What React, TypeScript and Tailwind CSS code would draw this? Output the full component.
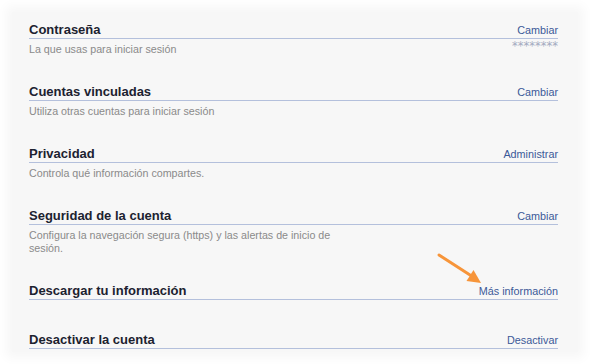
const rows = [
  { title: "Contraseña", action: "Cambiar", desc: "La que usas para iniciar sesión", stars: true },
  { title: "Cuentas vinculadas", action: "Cambiar", desc: "Utiliza otras cuentas para iniciar sesión" },
  { title: "Privacidad", action: "Administrar", desc: "Controla qué información compartes." },
  {
    title: "Seguridad de la cuenta",
    action: "Cambiar",
    desc: "Configura la navegación segura (https) y las alertas de inicio de\nsesión.",
  },
  { title: "Descargar tu información", action: "Más información" },
  { title: "Desactivar la cuenta", action: "Desactivar" },
];

function SettingRow({ title, action, desc, stars }: { title: string; action: string; desc?: string; stars?: boolean }) {
  return (
    <div className={desc ? "mb-[28px]" : "mb-[32px]"}>
      <div className="flex items-baseline justify-between border-b border-[#b4c0dc] leading-[16px]">
        <span className="font-['Liberation_Sans',sans-serif] text-[13px] font-bold text-[#1c2230]">{title}</span>
        <a className="font-['Liberation_Sans',sans-serif] text-[10.8px] text-[#3b5998]">{action}</a>
      </div>
      {desc && (
        <div className="flex items-start justify-between pt-[4px]">
          <p className="whitespace-pre-line font-['Liberation_Sans',sans-serif] text-[10.7px] leading-[13px] text-[#8a8a8a]">
            {desc}
          </p>
          {stars && (
            <span className="-mt-[3px] font-['DejaVu_Sans',sans-serif] text-[11.5px] leading-[13px] text-[#a3aac0]">
              ********
            </span>
          )}
        </div>
      )}
    </div>
  );
}

export default function App() {
  return (
    <div className="relative h-[364px] w-[590px] overflow-hidden bg-white p-3">
      <div className="h-full bg-[#f7f7f7] pl-[17px] pr-5 pt-[10px] shadow-[0_0_10px_6px_#f7f7f7]">
        {rows.map((r) => (
          <SettingRow key={r.title} {...r} />
        ))}
      </div>
      <svg className="absolute left-0 top-0" width="590" height="364" viewBox="0 0 590 364">
        <line x1="439" y1="255" x2="470" y2="275" stroke="#f7953a" strokeWidth="3" strokeLinecap="round" />
        <polygon points="481,283 466.5,281 473.5,270" fill="#f7953a" />
      </svg>
    </div>
  );
}
